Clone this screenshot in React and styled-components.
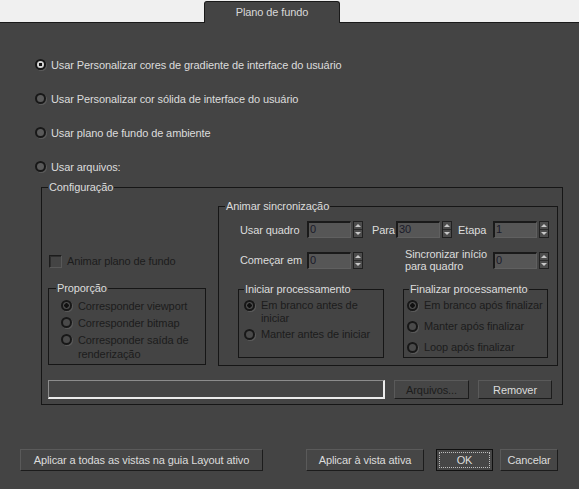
import styled, { createGlobalStyle } from "styled-components";

const GlobalStyle = createGlobalStyle`
  body {
    margin: 0;
    background: #444444;
    font-family: "Liberation Sans", Arial, sans-serif;
    font-size: 11px;
  }
`;

const Window = styled.div`
  width: 579px;
  height: 489px;
  background: #444444;
  overflow: hidden;
  color: #dcdcdc;
  font-family: "Liberation Sans", Arial, sans-serif;
  font-size: 11px;
  letter-spacing: -0.1px;
`;

const TabStrip = styled.div`
  height: 23px;
  box-sizing: border-box;
  background: #f0f0f0;
  border-bottom: 1px solid #1a1a1a;
  display: flex;
  align-items: flex-end;
  padding-left: 204px;
`;

const Tab = styled.div`
  width: 136px;
  height: 22px;
  box-sizing: border-box;
  margin-bottom: -1px;
  background: #444444;
  border: 1px solid #1a1a1a;
  border-bottom: none;
  border-radius: 3px 3px 0 0;
  text-align: center;
  line-height: 20px;
  color: #d8d8d8;
`;

const Body = styled.div`
  display: flex;
  flex-direction: column;
`;

const ModeList = styled.div`
  display: flex;
  flex-direction: column;
  gap: 20px;
  padding: 35px 0 0 35px;
`;

const Option = styled.label`
  display: flex;
  align-items: flex-start;
  gap: ${(p) => p.$gap || 6}px;
  line-height: ${(p) => p.$lh || 14}px;
  color: ${(p) => (p.$disabled ? "#1c1c1c" : "#dcdcdc")};
`;

const Dot = styled.span`
  flex: none;
  width: 11px;
  height: 11px;
  margin-top: ${(p) => p.$top || 1}px;
  box-sizing: border-box;
  border-radius: 50%;
  border: 2px solid #181818;
  background: ${(p) =>
    p.$on
      ? p.$disabled
        ? "radial-gradient(circle, #111 0 2px, #4e4e4e 2.5px)"
        : "radial-gradient(circle, #111 0 1.5px, #d4d4d4 2px)"
      : p.$disabled
      ? "#4a4a4a"
      : "#5a5a5a"};
  box-shadow: 1px 1px 0 rgba(255, 255, 255, 0.12);
`;

const Radio = ({ on, disabled, children, gap, lh, top }) => (
  <Option $disabled={disabled} $gap={gap} $lh={lh}>
    <Dot $on={on} $disabled={disabled} $top={top} />
    <span>{children}</span>
  </Option>
);

const Group = styled.fieldset`
  margin: ${(p) => p.$margin || 0};
  padding: ${(p) => p.$pad || "0 4px 0 6px"};
  border: 1px solid #161616;
  min-width: 0;
  box-sizing: border-box;
  width: ${(p) => (p.$w ? `${p.$w}px` : "auto")};
  height: ${(p) => (p.$h ? `${p.$h}px` : "auto")};
`;

const Legend = styled.legend`
  padding: 0 1px;
  line-height: 14px;
  color: #dcdcdc;
`;

const Columns = styled.div`
  display: grid;
  grid-template-columns: 158px 340px;
  column-gap: 12px;
  margin-top: 5px;
`;

const LeftCol = styled.div`
  display: flex;
  flex-direction: column;
`;

const Check = styled.label`
  display: flex;
  align-items: center;
  gap: 5px;
  line-height: 14px;
  margin: 55px 0 13px 1px;
  color: #1c1c1c;
`;

const Box = styled.span`
  width: 13px;
  height: 13px;
  box-sizing: border-box;
  border: 1px solid #1c1c1c;
  border-right-color: #585858;
  border-bottom-color: #585858;
  box-shadow: inset 1px 1px 0 #2e2e2e;
  background: #444;
`;

const OptionStack = styled.div`
  display: flex;
  flex-direction: column;
  gap: ${(p) => p.$gap || 3}px;
  padding: ${(p) => p.$pad || "0"};
  margin-left: ${(p) => p.$shift || 0}px;
`;

const Row = styled.div`
  display: flex;
  align-items: center;
  padding-left: 15px;
  margin-top: ${(p) => p.$top || 0}px;
`;

const FieldLabel = styled.span`
  width: ${(p) => p.$w}px;
  margin-left: ${(p) => p.$ml || 0}px;
  line-height: 12px;
  flex: none;
`;

const NumBox = styled.div`
  width: 44px;
  height: 17px;
  box-sizing: border-box;
  background: #565656;
  border-top: 2px solid #1a1a1a;
  border-left: 2px solid #1a1a1a;
  border-right: 1px solid #606060;
  border-bottom: 1px solid #606060;
  color: #1a1a2a;
  line-height: 12px;
  padding-left: 1px;
`;

const Arrows = styled.div`
  width: 10px;
  height: 17px;
  margin-left: 2px;
  box-sizing: border-box;
  border: 1px solid #202020;
  background: #4c4c4c;
  display: flex;
  flex-direction: column;
`;

const Arrow = styled.span`
  flex: 1;
  display: flex;
  align-items: center;
  justify-content: center;
  border-top: ${(p) => (p.$down ? "1px solid #2a2a2a" : "none")};
  &::after {
    content: "";
    border-left: 3px solid transparent;
    border-right: 3px solid transparent;
    ${(p) =>
      p.$down ? "border-top: 3px solid #c8c8c8;" : "border-bottom: 3px solid #c8c8c8;"}
  }
`;

const Spinner = ({ value }) => (
  <>
    <NumBox>{value}</NumBox>
    <Arrows>
      <Arrow />
      <Arrow $down />
    </Arrows>
  </>
);

const SubGroups = styled.div`
  display: flex;
  gap: 19px;
  margin: 10px 0 0 13px;
`;

const FileRow = styled.div`
  display: flex;
  align-items: center;
  margin-top: 14px;
`;

const PathField = styled.div`
  width: 337px;
  height: 19px;
  box-sizing: border-box;
  background: #454545;
  border-top: 1px solid #8c8c8c;
  border-left: 1px solid #8c8c8c;
  border-right: 2px solid #ececec;
  border-bottom: 2px solid #ececec;
`;

const Button = styled.button`
  width: ${(p) => p.$w}px;
  height: ${(p) => p.$h || 22}px;
  margin-left: ${(p) => p.$ml || 0}px;
  padding: 0;
  box-sizing: border-box;
  background: #464646;
  border: 1px solid #1c1c1c;
  border-top-color: #5a5a5a;
  border-left-color: #5a5a5a;
  color: ${(p) => (p.$disabled ? "#1c1c1c" : "#dcdcdc")};
  font-family: inherit;
  font-size: 11px;
  letter-spacing: -0.1px;
  display: flex;
  align-items: center;
  justify-content: center;
`;

const DefaultButton = styled(Button)`
  border: 1px solid #101010;
  padding: 2px;
`;

const Focus = styled.span`
  flex: 1;
  align-self: stretch;
  display: flex;
  align-items: center;
  justify-content: center;
  border: 1px dotted #bdbdbd;
`;

const Footer = styled.div`
  display: flex;
  align-items: center;
  padding-left: 20px;
  margin-top: 44px;
`;

export default function App() {
  return (
    <Window>
      <GlobalStyle />
      <TabStrip>
        <Tab>Plano de fundo</Tab>
      </TabStrip>
      <Body>
        <ModeList>
          <Radio on gap={5}>Usar Personalizar cores de gradiente de interface do usuário</Radio>
          <Radio gap={5}>Usar Personalizar cor sólida de interface do usuário</Radio>
          <Radio gap={5}>Usar plano de fundo de ambiente</Radio>
          <Radio gap={5}>Usar arquivos:</Radio>
        </ModeList>

        <Group $margin="6px 0 0 41px" $w={522} $pad="0 4px 5px 6px">
          <Legend>Configuração</Legend>
          <Columns>
            <LeftCol>
              <Check>
                <Box />
                Animar plano de fundo
              </Check>
              <Group $h={84} $pad="0 4px 0 7px">
                <Legend>Proporção</Legend>
                <OptionStack $pad="4px 0 0 5px">
                  <Radio on disabled>Corresponder viewport</Radio>
                  <Radio disabled>Corresponder bitmap</Radio>
                  <Radio disabled>
                    Corresponder saída de
                    <br />
                    renderização
                  </Radio>
                </OptionStack>
              </Group>
            </LeftCol>

            <Group $h={167} $pad="0 4px 0 6px">
              <Legend>Animar sincronização</Legend>
              <Row $top={8}>
                <FieldLabel $w={67}>Usar quadro</FieldLabel>
                <Spinner value="0" />
                <FieldLabel $w={24} $ml={9}>Para</FieldLabel>
                <Spinner value="30" />
                <FieldLabel $w={35} $ml={6}>Etapa</FieldLabel>
                <Spinner value="1" />
              </Row>
              <Row $top={10}>
                <FieldLabel $w={67}>Começar em</FieldLabel>
                <Spinner value="0" />
                <FieldLabel $w={88} $ml={42}>
                  Sincronizar início
                  <br />
                  para quadro
                </FieldLabel>
                <Spinner value="0" />
              </Row>
              <SubGroups>
                <Group $w={146} $h={76} $pad="0 4px 0 5px">
                  <Legend>Iniciar processamento</Legend>
                  <OptionStack $gap={3} $pad="3px 0 0 0">
                    <Radio on disabled lh={13}>
                      Em branco antes de
                      <br />
                      iniciar
                    </Radio>
                    <Radio disabled lh={13}>Manter antes de iniciar</Radio>
                  </OptionStack>
                </Group>
                <Group $w={145} $h={76} $pad="0 4px 0 5px">
                  <Legend>Finalizar processamento</Legend>
                  <OptionStack $gap={8} $pad="3px 0 0 0" $shift={-2}>
                    <Radio on disabled lh={13}>Em branco após finalizar</Radio>
                    <Radio disabled lh={13}>Manter após finalizar</Radio>
                    <Radio disabled lh={13}>Loop após finalizar</Radio>
                  </OptionStack>
                </Group>
              </SubGroups>
            </Group>
          </Columns>

          <FileRow>
            <PathField />
            <Button $w={75} $h={19} $ml={9} $disabled>Arquivos...</Button>
            <Button $w={74} $h={19} $ml={9}>Remover</Button>
          </FileRow>
        </Group>

        <Footer>
          <Button $w={243}>Aplicar a todas as vistas na guia Layout ativo</Button>
          <Button $w={118} $ml={43}>Aplicar à vista ativa</Button>
          <DefaultButton $w={57} $ml={12}>
            <Focus>OK</Focus>
          </DefaultButton>
          <Button $w={58} $ml={7}>Cancelar</Button>
        </Footer>
      </Body>
    </Window>
  );
}
